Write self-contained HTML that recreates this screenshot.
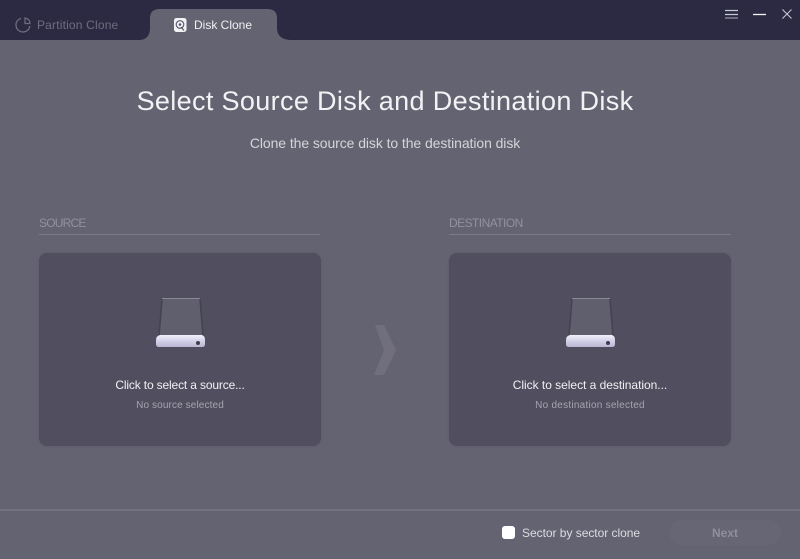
<!DOCTYPE html>
<html><head><meta charset="utf-8"><style>
html,body{margin:0;padding:0}
body{width:800px;height:559px;overflow:hidden;position:relative;background:#646371;font-family:"Liberation Sans",sans-serif}
.a{position:absolute;white-space:nowrap}
.c{text-align:center}
.card{position:absolute;top:253px;height:193px;background:#514f5f;border-radius:8px;box-shadow:0 0 2px #5a5967}
</style></head><body>
<div class="a" style="left:0;top:0;width:800px;height:40px;background:#2b2a42"></div>
<svg class="a" style="left:0;top:0" width="300" height="42" viewBox="0 0 300 42">
<path d="M140 40 Q150 39 150 28 V18 Q150 9 160 9 H267 Q277 9 277 18 V28 Q277 39 290 40 Z" fill="#646371"/>
<g fill="none" stroke="#6f6e80" stroke-width="1.2"><path d="M21 18.300 A7 7 0 1 0 29.900 26"/><path d="M25 18 V23.500 H30 Q30 19 25 18 Z"/></g>
<rect x="174" y="18" width="12.500" height="14" rx="2.500" fill="#f2f2f4"/>
<circle cx="180" cy="24.500" r="3.800" fill="none" stroke="#55546a" stroke-width="1.100"/>
<circle cx="180" cy="24.500" r="1.300" fill="#55546a"/>
<path d="M181 27 L184 30.500" stroke="#55546a" stroke-width="1.100"/>
</svg>
<div class="a" style="left:37px;top:18px;font-size:12px;line-height:14px;color:#6f6e80;letter-spacing:.18px">Partition Clone</div>
<div class="a" style="left:194px;top:18px;font-size:12px;line-height:14px;color:#f0f0f2;letter-spacing:0">Disk Clone</div>
<svg class="a" style="left:720px;top:0" width="80" height="30">
<g stroke="#c8c8d2" stroke-width="1.200"><path d="M5 10.500H18M5 14.500H18"/><path d="M5 18H18" stroke="#9a9aa8"/></g>
<path d="M33 14.500H46" stroke="#f4f4f6" stroke-width="1.300"/>
<path d="M62.500 9.500L71.500 18.500M71.500 9.500L62.500 18.500" stroke="#c8c8d2" stroke-width="1.100"/>
</svg>
<div class="a c" style="left:0;width:770px;top:84px;font-size:27px;line-height:34px;color:#f2f2f5;letter-spacing:.35px">Select Source Disk and Destination Disk</div>
<div class="a c" style="left:0;width:770px;top:135px;font-size:14px;line-height:17px;color:#d4d4da;letter-spacing:-.08px">Clone the source disk to the destination disk</div>
<div class="a" style="left:39px;top:216px;font-size:12px;line-height:14px;color:#92919e;letter-spacing:-.8px">SOURCE</div>
<div class="a" style="left:39px;top:234px;width:281px;height:1px;background:#7b7a87"></div>
<div class="a" style="left:449px;top:216px;font-size:12px;line-height:14px;color:#92919e;letter-spacing:-.55px">DESTINATION</div>
<div class="a" style="left:449px;top:234px;width:282px;height:1px;background:#7b7a87"></div>
<div class="card" style="left:39px;width:282px"></div>
<div class="card" style="left:449px;width:282px"></div>
<svg class="a" style="left:150px;top:295px" width="60" height="60">
<defs><linearGradient id="g" x1="0" y1="0" x2="0" y2="1"><stop offset="0" stop-color="#f2f1fa"/><stop offset=".45" stop-color="#d6d4ea"/><stop offset="1" stop-color="#b9b7d2"/></linearGradient></defs>
<path d="M12 3.500 H50 L53 41 H9 Z" fill="#605f6e"/><path d="M12 3.500 H50" stroke="#8a8997"/>
<path d="M12 4 L9 41 M50 4 L53 41" stroke="#434250" stroke-width="1.500"/>
<path d="M10 40 H52 Q55 41 55 45 V49 Q55 52 52 52 H9 Q6 52 6 49 V45 Q6 41 10 40 Z" fill="url(#g)"/>
<circle cx="48" cy="48" r="2" fill="#3e3d4c"/></svg>
<svg class="a" style="left:560px;top:295px" width="60" height="60">
<path d="M12 3.500 H50 L53 41 H9 Z" fill="#605f6e"/><path d="M12 3.500 H50" stroke="#8a8997"/>
<path d="M12 4 L9 41 M50 4 L53 41" stroke="#434250" stroke-width="1.500"/>
<path d="M10 40 H52 Q55 41 55 45 V49 Q55 52 52 52 H9 Q6 52 6 49 V45 Q6 41 10 40 Z" fill="url(#g)"/>
<circle cx="48" cy="48" r="2" fill="#3e3d4c"/></svg>
<div class="a c" style="left:39px;width:282px;top:378px;font-size:12px;line-height:15px;color:#f0f0f2;letter-spacing:-.15px">Click to select a source...</div>
<div class="a c" style="left:39px;width:282px;top:399px;font-size:10px;line-height:13px;color:#a5a4af;letter-spacing:.12px">No source selected</div>
<div class="a c" style="left:449px;width:282px;top:378px;font-size:12px;line-height:15px;color:#f0f0f2;letter-spacing:-.03px">Click to select a destination...</div>
<div class="a c" style="left:449px;width:282px;top:399px;font-size:10px;line-height:13px;color:#a5a4af;letter-spacing:.25px">No destination selected</div>
<svg class="a" style="left:370px;top:320px" width="32" height="60"><path d="M5 5 H14 L26 30 L14 55 H4 L14 30 Z" fill="#716f7e"/></svg>
<div class="a" style="left:0;top:509px;width:800px;height:2px;background:#72717e"></div>
<div class="a" style="left:502px;top:526px;width:13px;height:13px;background:#fff;border-radius:3px"></div>
<div class="a" style="left:522px;top:526px;font-size:12px;line-height:14px;color:#dcdce1;letter-spacing:-.03px">Sector by sector clone</div>
<div class="a c" style="left:669px;top:520px;width:112px;height:25px;line-height:26px;border-radius:13px;background:#676674;color:#908f9b;font-size:12px;font-weight:bold">Next</div>
</body></html>
